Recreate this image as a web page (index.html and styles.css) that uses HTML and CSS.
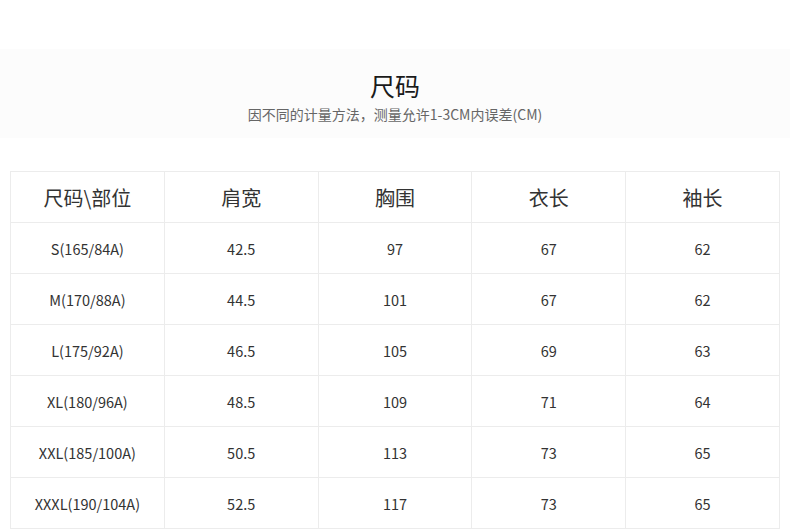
FILE: index.html
```html
<!DOCTYPE html>
<html lang="zh-CN">
<head>
<meta charset="utf-8">
<title>尺码</title>
<link rel="stylesheet" href="styles.css">
</head>
<body>
<div class="page">
  <section class="intro">
    <h1 class="title">尺码</h1>
    <p class="subtitle">因不同的计量方法，测量允许1-3CM内误差(CM)</p>
  </section>
  <table class="size-table">
    <thead>
      <tr><th>尺码\部位</th><th>肩宽</th><th>胸围</th><th>衣长</th><th>袖长</th></tr>
    </thead>
    <tbody>
      <tr><td>S(165/84A)</td><td>42.5</td><td>97</td><td>67</td><td>62</td></tr>
      <tr><td>M(170/88A)</td><td>44.5</td><td>101</td><td>67</td><td>62</td></tr>
      <tr><td>L(175/92A)</td><td>46.5</td><td>105</td><td>69</td><td>63</td></tr>
      <tr><td>XL(180/96A)</td><td>48.5</td><td>109</td><td>71</td><td>64</td></tr>
      <tr><td>XXL(185/100A)</td><td>50.5</td><td>113</td><td>73</td><td>65</td></tr>
      <tr><td>XXXL(190/104A)</td><td>52.5</td><td>117</td><td>73</td><td>65</td></tr>
    </tbody>
  </table>
</div>
</body>
</html>
```

FILE: styles.css
```css
html, body {
  margin: 0;
  padding: 0;
  background: #ffffff;
}
body {
  font-family: "Noto Sans CJK SC", "Noto Sans", sans-serif;
  color: #333333;
}
.page {
  padding-top: 49px;
}
.intro {
  background: #fcfcfc;
  height: 89px;
  box-sizing: border-box;
  padding-top: 19px;
  text-align: center;
}
.title {
  margin: 0;
  font-size: 25px;
  line-height: 34px;
  font-weight: 400;
  color: #1a1a1a;
}
.subtitle {
  margin: 2px 0 0;
  font-size: 14px;
  line-height: 20px;
  color: #666666;
}
.size-table {
  margin: 33px 0 0 10px;
  width: 770px;
  border-collapse: collapse;
  table-layout: fixed;
}
.size-table th,
.size-table td {
  border: 1px solid #ececec;
  text-align: center;
  padding: 0;
  height: 50px;
}
.size-table th {
  font-size: 20px;
  font-weight: 400;
  color: #333333;
}
.size-table td {
  font-size: 14.5px;
  color: #333333;
}
```
